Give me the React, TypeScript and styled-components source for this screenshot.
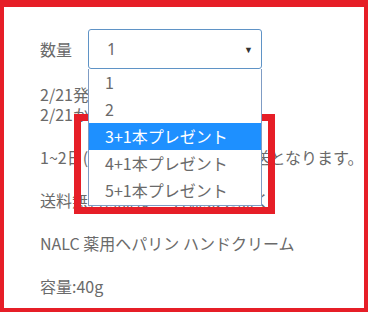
import styled, { createGlobalStyle } from "styled-components";

const GlobalStyle = createGlobalStyle`
  html, body {
    margin: 0;
    padding: 0;
    background: #ffffff;
  }
  body {
    font-family: "Noto Sans CJK JP", "Noto Sans", sans-serif;
  }
`;

const Frame = styled.div`
  position: relative;
  box-sizing: border-box;
  width: 368px;
  height: 312px;
  border: 4px solid #e61e27;
  border-top-width: 7px;
  overflow: hidden;
  background: #ffffff;
`;

const Content = styled.div`
  padding: 22px 0 0 36px;
  color: #6a6a6a;
  font-size: 16px;
`;

const QuantityRow = styled.div`
  display: flex;
  align-items: center;
  height: 40px;
`;

const Label = styled.span`
  width: 48px;
  line-height: 20px;
`;

const SelectWrap = styled.div`
  position: relative;
  width: 174px;
`;

const SelectBox = styled.div`
  box-sizing: border-box;
  display: flex;
  align-items: center;
  justify-content: space-between;
  height: 40px;
  padding: 0 8px 0 18px;
  border: 1px solid #5f93c6;
  border-radius: 3px;
  font-family: "Noto Sans", sans-serif;
  color: #6a6a6a;
`;

const Arrow = styled.span`
  font-size: 9px;
  color: #333333;
`;

const OptionList = styled.ul`
  position: absolute;
  top: 40px;
  left: 0;
  box-sizing: border-box;
  width: 174px;
  margin: 0;
  padding: 0 0 1px;
  list-style: none;
  background: #ffffff;
  border: 1px solid #7f9cc4;
  border-top: none;
  z-index: 2;
`;

const Option = styled.li<{ $active?: boolean }>`
  height: 27px;
  line-height: 27px;
  padding-left: 16px;
  background: ${(p) => (p.$active ? "#1e90ff" : "transparent")};
  color: ${(p) => (p.$active ? "#ffffff" : "#6a6a6a")};
`;

const Paragraphs = styled.div`
  display: flex;
  flex-direction: column;
  gap: 23px;
  margin-top: 15px;
`;

const Para = styled.p`
  margin: 0;
  line-height: 20px;
  white-space: nowrap;
`;

const Callout = styled.div`
  position: absolute;
  left: 70px;
  top: 107px;
  box-sizing: border-box;
  width: 201px;
  height: 100px;
  border: 7px solid #e61e27;
  z-index: 1;
`;

const options = ["1", "2", "3+1本プレゼント", "4+1本プレゼント", "5+1本プレゼント"];

export default function App() {
  return (
    <>
      <GlobalStyle />
      <Frame>
        <Content>
          <QuantityRow>
            <Label>数量</Label>
            <SelectWrap>
              <SelectBox>
                <span>1</span>
                <Arrow>▼</Arrow>
              </SelectBox>
              <OptionList>
                {options.map((o, i) => (
                  <Option key={o} $active={i === 2}>
                    {o}
                  </Option>
                ))}
              </OptionList>
            </SelectWrap>
          </QuantityRow>
          <Paragraphs>
            <Para>
              2/21発送予定
              <br />
              2/21からの出荷
            </Para>
            <Para>1~2日(土日・祝日を除く)で発送となります。</Para>
            <Para>送料無料(北海道・沖縄県を除く)</Para>
            <Para>NALC 薬用ヘパリン ハンドクリーム</Para>
            <Para>容量:40g</Para>
          </Paragraphs>
        </Content>
        <Callout />
      </Frame>
    </>
  );
}
